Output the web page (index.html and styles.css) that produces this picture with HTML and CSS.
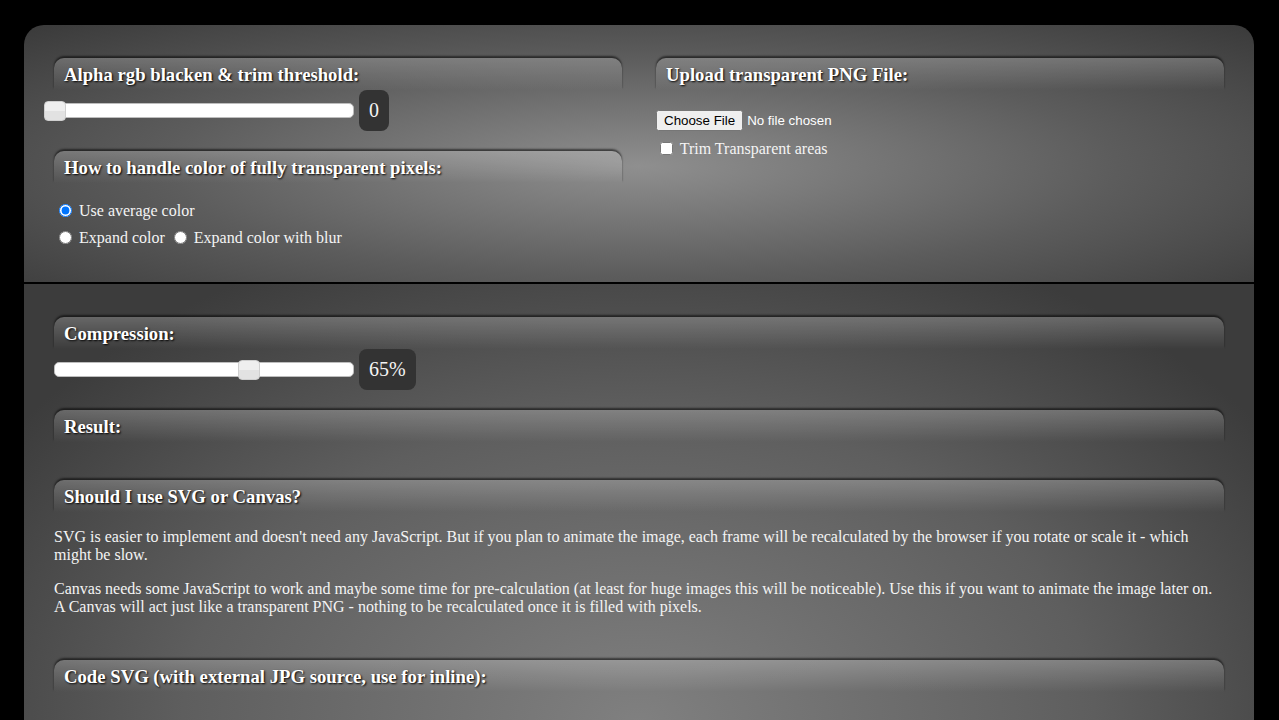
FILE: index.html
```html
<!DOCTYPE html>
<html lang="en">

<head>
    <meta charset="UTF-8">
    <meta name="viewport" content="width=device-width, initial-scale=1.0">
    <title>PNG to SVG / Canvas</title>
    <link rel="stylesheet" href="styles.css">
</head>

<body>
    <div class="page">
        <!-- Input settings -->
        <div class="panel panel-top">
            <div class="col">
                <h3 class="bar">Alpha rgb blacken &amp; trim threshold:</h3>
                <div class="slider-row">
                    <div class="slider">
                        <div class="thumb" style="left: 0%;"></div>
                    </div>
                    <span class="value">0</span>
                </div>

                <h3 class="bar">How to handle color of fully transparent pixels:</h3>
                <div class="radios">
                    <div class="line">
                        <input type="radio" name="mode" id="avg" checked>
                        <label for="avg">Use average color</label>
                    </div>
                    <div class="line">
                        <input type="radio" name="mode" id="expand">
                        <label for="expand">Expand color</label>
                        <input type="radio" name="mode" id="blur">
                        <label for="blur">Expand color with blur</label>
                    </div>
                </div>
            </div>

            <div class="col">
                <h3 class="bar">Upload transparent PNG File:</h3>
                <div class="upload">
                    <input type="file" accept="image/png">
                </div>
                <div class="line">
                    <input type="checkbox" id="trim">
                    <label for="trim">Trim Transparent areas</label>
                </div>
            </div>
        </div>

        <!-- Output -->
        <div class="panel panel-bottom">
            <h3 class="bar">Compression:</h3>
            <div class="slider-row">
                <div class="slider">
                    <div class="thumb" style="left: 65%;"></div>
                </div>
                <span class="value">65%</span>
            </div>

            <h3 class="bar">Result:</h3>
            <div class="result"></div>

            <h3 class="bar">Should I use SVG or Canvas?</h3>
            <div class="info">
                <p>SVG is easier to implement and doesn't need any JavaScript. But if you plan to animate the image, each frame will be recalculated by the browser if you rotate or scale it - which might be slow.</p>
                <p>Canvas needs some JavaScript to work and maybe some time for pre-calculation (at least for huge images this will be noticeable). Use this if you want to animate the image later on. A Canvas will act just like a transparent PNG - nothing to be recalculated once it is filled with pixels.</p>
            </div>

            <h3 class="bar">Code SVG (with external JPG source, use for inline):</h3>
            <div class="code"></div>
        </div>
    </div>
</body>

</html>
```

FILE: styles.css
```css
/* Reset styles */
* {
    box-sizing: border-box;
}

body {
    margin: 0;
    padding: 25px 25px 0 24px;
    background-color: #000;
    color: #f4f4f4;
    font-family: "Liberation Serif", "Times New Roman", serif;
    font-size: 16px;
}

.page {
    width: 1230px;
}

/* Panels */
.panel-top {
    display: grid;
    grid-template-columns: 568px 568px;
    column-gap: 34px;
    height: 259px;
    padding: 33px 30px 0 30px;
    border-radius: 20px 20px 0 0;
    border-bottom: 2px solid #000;
    background: radial-gradient(ellipse at 50% 55%, #8f8f8f 0%, #5c5c5c 55%, #3a3a3a 100%);
}

.panel-bottom {
    min-height: 760px;
    padding: 33px 30px 0 30px;
    background: radial-gradient(ellipse 760px 520px at 50% 440px, #808080 0%, #5e5e5e 60%, #3c3c3c 100%);
}

/* Section headers */
.bar {
    margin: 0;
    height: 32px;
    padding: 6px 10px 0;
    font-size: 1.17em;
    font-weight: bold;
    color: #fff;
    text-shadow: 1px 1px 2px #000;
    border-radius: 10px 10px 0 0;
    background: linear-gradient(rgba(255, 255, 255, 0.22), rgba(255, 255, 255, 0));
    box-shadow: 0 -2px 2px rgba(0, 0, 0, 0.55);
}

/* Range slider */
.slider-row {
    display: flex;
    align-items: center;
    gap: 5px;
    height: 41px;
    margin-bottom: 20px;
}

.slider {
    position: relative;
    width: 300px;
    height: 15px;
    background-color: #fff;
    border: 1px solid #bdbdbd;
    border-radius: 5px;
}

.thumb {
    position: absolute;
    top: -3px;
    width: 22px;
    height: 20px;
    margin-left: -11px;
    border: 1px solid #cfcfcf;
    border-radius: 4px;
    background: linear-gradient(#efefef 50%, #e2e2e2 50%);
}

.value {
    height: 41px;
    line-height: 41px;
    padding: 0 10px;
    font-size: 20px;
    background-color: #333;
    border-radius: 8px;
}

/* Form lines */
.radios {
    margin-top: 18px;
}

.line {
    height: 27px;
}

.line input {
    vertical-align: -1px;
}

.upload {
    margin: 20px 0 8px;
}

.upload input {
    font-family: "Liberation Sans", Arial, sans-serif;
    font-size: 13.33px;
    color: #fff;
}

/* Bottom content */
.result {
    height: 38px;
}

.info p {
    margin: 16px 0 16px;
}

.info + .bar {
    margin-top: 44px;
}

.code {
    margin-top: 28px;
}
```
